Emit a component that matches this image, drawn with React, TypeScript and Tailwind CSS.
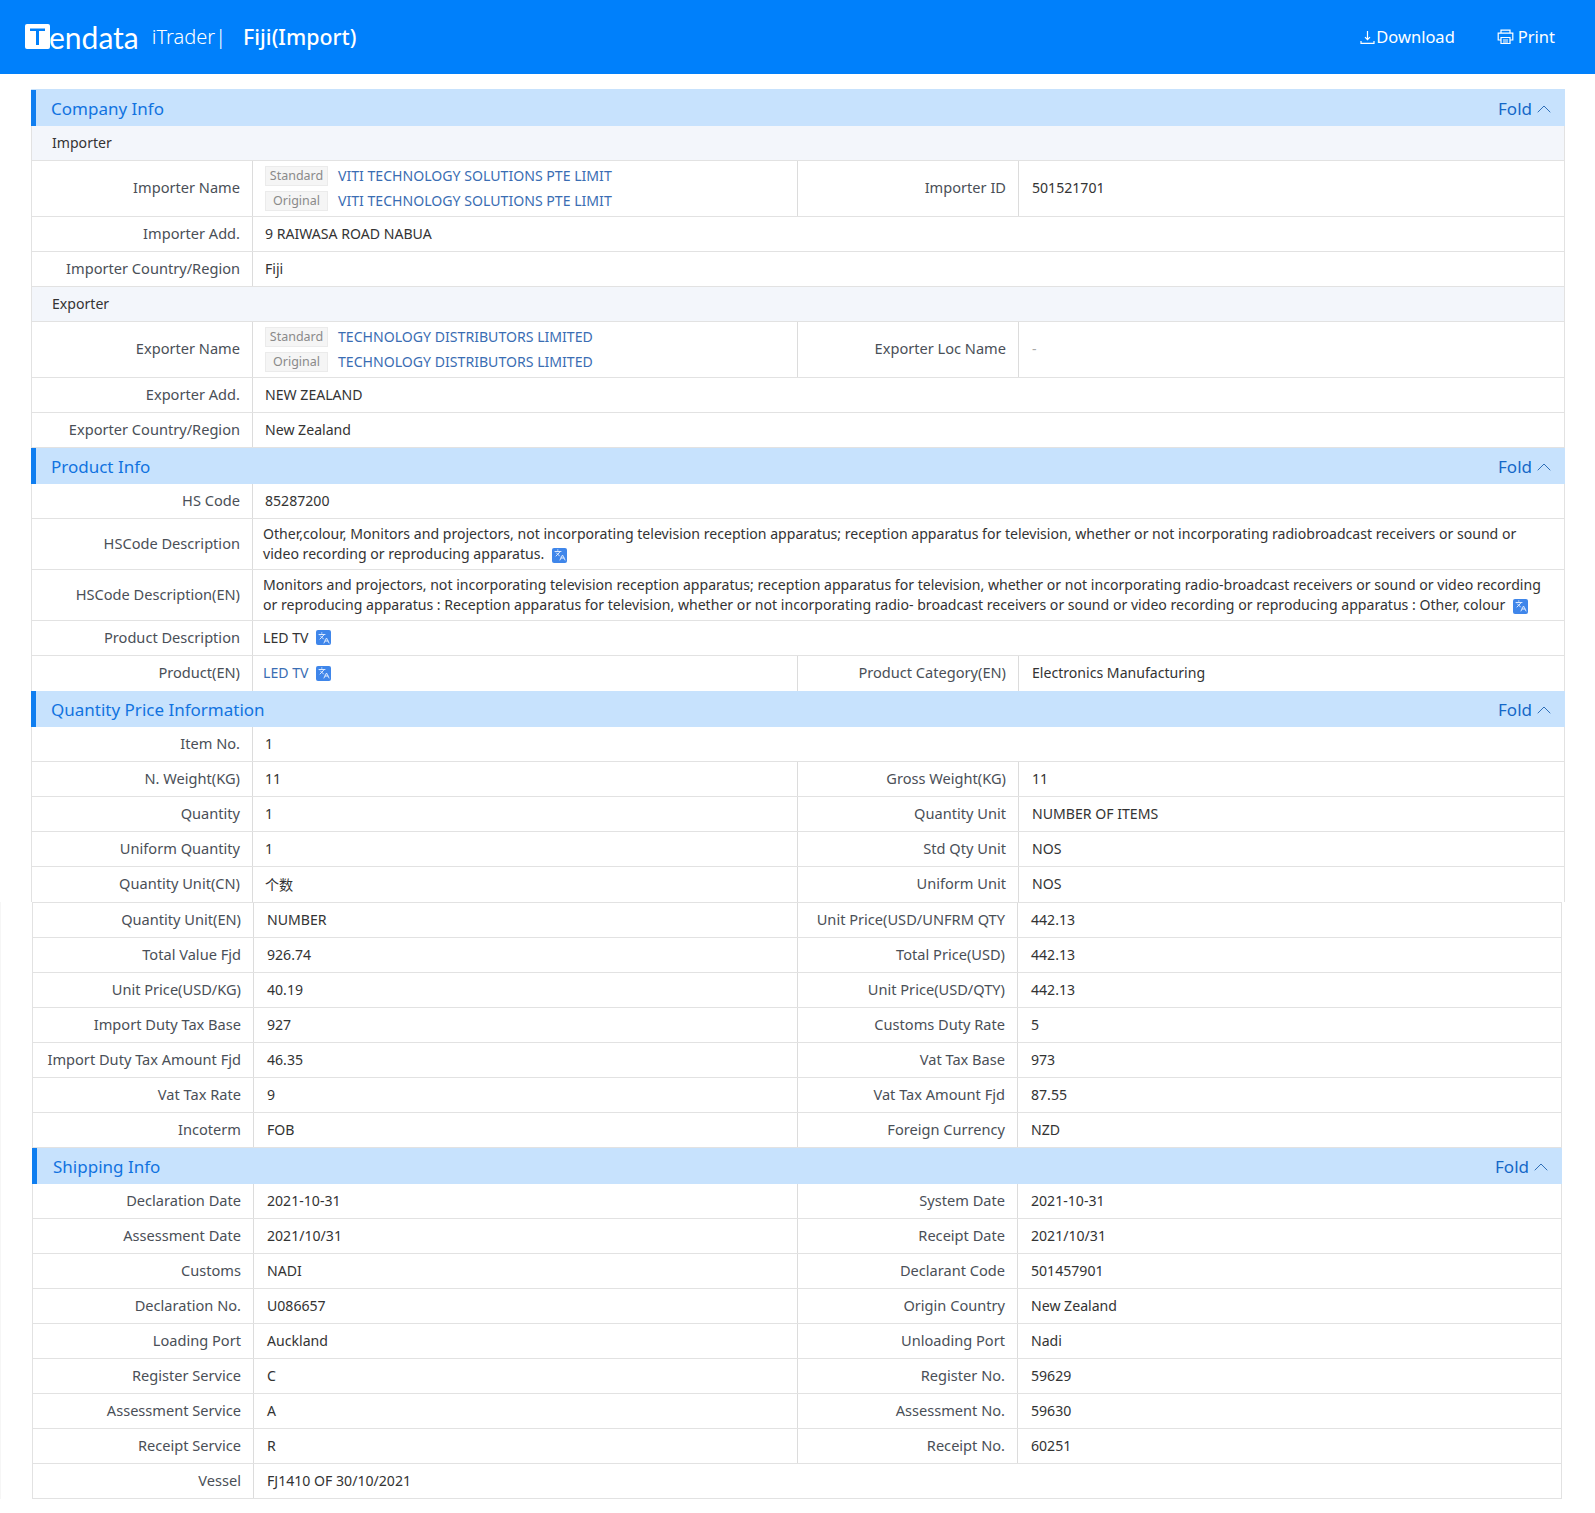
import React from "react";
import { Languages, ChevronUp } from "lucide-react";

function Trans() {
  return (
    <span className="ml-[8px] inline-flex h-[15px] w-[15px] items-center justify-center rounded-[2px] bg-[#3f86ea] align-[-2px] text-[#dbe9ff]">
      <Languages size={12} strokeWidth={2} />
    </span>
  );
}

function Section({ title, narrow }: { title: string; narrow?: boolean }) {
  return (
    <div className={`flex h-[36px] items-center justify-between border-l-[5px] border-[#0f7ef0] bg-[#c7e2fd] pr-[9px] pt-[2px] ${narrow ? "pl-[16px]" : "pl-[15px]"}`}>
      <span className="text-[17px] text-[#1173e0]">{title}</span>
      <span className="flex items-center text-[17px] text-[#1468c8]">
        Fold
        <ChevronUp size={24} strokeWidth={1} className="text-[#2f6fb8]" />
      </span>
    </div>
  );
}

function Sub({ title }: { title: string }) {
  return (
    <div className="flex h-[35px] items-center border-x border-b border-[#e2e2e2] bg-[#f3f6fb] pb-[1px] pl-[20px] text-[#333]">{title}</div>
  );
}

function Label({ children, w }: { children: React.ReactNode; w: string }) {
  return (
    <div className={`flex shrink-0 items-center justify-end border-r border-[#dcdcdc] pb-[1px] pr-[12px] text-[14.6px] text-[#4a4f57] ${w}`}>{children}</div>
  );
}

function Row({ a, b, c, d, narrow }: { a: string; b: React.ReactNode; c?: string; d?: React.ReactNode; narrow?: boolean }) {
  return (
    <div className="flex h-[35px] border-x border-b border-[#e2e2e2]">
      <Label w="w-[221px]">{a}</Label>
      {c ? (
        <>
          <div className={`flex shrink-0 items-center border-r border-[#dcdcdc] pb-[1px] ${narrow ? "w-[544px] pl-[13px]" : "w-[545px] pl-[12px]"} text-[#333]`}>{b}</div>
          <Label w={narrow ? "w-[220px]" : "w-[221px]"}>{c}</Label>
          <div className="flex items-center pb-[1px] pl-[13px] text-[#333]">{d}</div>
        </>
      ) : (
        <div className={`flex items-center pb-[1px] text-[#333] ${narrow ? "pl-[13px]" : "pl-[12px]"}`}>{b}</div>
      )}
    </div>
  );
}

function Tag({ children }: { children: string }) {
  return (
    <span className="flex h-[20px] w-[63px] items-center justify-center border border-[#ebebeb] bg-[#f5f5f5] text-[12.5px] text-[#8a8a8a]">{children}</span>
  );
}

function NameRow({ a, name, c, d, dim }: { a: string; name: string; c: string; d: string; dim?: boolean }) {
  return (
    <div className="flex h-[56px] border-x border-b border-[#e2e2e2]">
      <Label w="w-[221px]">{a}</Label>
      <div className="flex w-[545px] shrink-0 flex-col justify-center gap-[5px] border-r border-[#dcdcdc] pl-[12px] leading-[20px]">
        <div className="flex items-center gap-[10px]">
          <Tag>Standard</Tag>
          <span className="text-[#3a6db3]">{name}</span>
        </div>
        <div className="flex items-center gap-[10px]">
          <Tag>Original</Tag>
          <span className="text-[#3a6db3]">{name}</span>
        </div>
      </div>
      <Label w="w-[221px]">{c}</Label>
      <div className={`flex items-center pb-[1px] pl-[13px] ${dim ? "text-[#aaa]" : "text-[#333]"}`}>{d}</div>
    </div>
  );
}

function TextRow({ a, lines }: { a: string; lines: React.ReactNode }) {
  return (
    <div className="flex h-[51px] border-x border-b border-[#e2e2e2]">
      <Label w="w-[221px]">{a}</Label>
      <div className="flex-1 pl-[10px] pr-[16px] pt-[5px] leading-[20px] text-[#333]">{lines}</div>
    </div>
  );
}

const lower1: [string, string, string, string][] = [
  ["Quantity Unit(EN)", "NUMBER", "Unit Price(USD/UNFRM QTY", "442.13"],
  ["Total Value Fjd", "926.74", "Total Price(USD)", "442.13"],
  ["Unit Price(USD/KG)", "40.19", "Unit Price(USD/QTY)", "442.13"],
  ["Import Duty Tax Base", "927", "Customs Duty Rate", "5"],
  ["Import Duty Tax Amount Fjd", "46.35", "Vat Tax Base", "973"],
  ["Vat Tax Rate", "9", "Vat Tax Amount Fjd", "87.55"],
  ["Incoterm", "FOB", "Foreign Currency", "NZD"],
];

const lower2: [string, string, string, string][] = [
  ["Declaration Date", "2021-10-31", "System Date", "2021-10-31"],
  ["Assessment Date", "2021/10/31", "Receipt Date", "2021/10/31"],
  ["Customs", "NADI", "Declarant Code", "501457901"],
  ["Declaration No.", "U086657", "Origin Country", "New Zealand"],
  ["Loading Port", "Auckland", "Unloading Port", "Nadi"],
  ["Register Service", "C", "Register No.", "59629"],
  ["Assessment Service", "A", "Assessment No.", "59630"],
  ["Receipt Service", "R", "Receipt No.", "60251"],
];

export default function App() {
  return (
    <div className="min-h-[1513px] bg-white font-['Noto_Sans','Noto_Sans_CJK_SC',sans-serif] text-[14.1px]">
      <header className="flex h-[74px] items-center justify-between bg-[#0080fb] pl-[25px] pr-[40px] text-white">
        <div className="flex items-center">
          <svg width="25" height="25" viewBox="0 0 25 25">
            <rect width="25" height="25" rx="2" fill="#fff" />
            <path d="M5 4.5h15v2.6h-6v13.9h-3V7.1H5z" fill="#0080fb" />
          </svg>
          <span className="ml-[-1px] font-['Lato',sans-serif] text-[30px] font-normal leading-none">endata</span>
          <span className="ml-[13px] text-[20px] font-light">iTrader|</span>
          <span className="ml-[17px] text-[21.4px] font-medium">Fiji(Import)</span>
        </div>
        <div className="flex items-center text-[16.5px]">
          <svg width="15" height="15" viewBox="0 0 15 15" fill="none" stroke="#fff" strokeWidth="1.2">
            <path d="M7.5 1v8.5M5 7.2l2.5 2.5L10 7.2M1 11v2.3h13V11" />
          </svg>
          <span className="ml-[1px]">Download</span>
          <svg className="ml-[42px]" width="17" height="16" viewBox="0 0 17 16" fill="none" stroke="#fff" strokeWidth="1.2">
            <path d="M4 4V1.2h9V4M4 11H1.2V4.2h14.6V11H13M4 8.5h9v6H4zM6 11h5M6 13h5" />
          </svg>
          <span className="ml-[4px]">Print</span>
        </div>
      </header>

      <div className="ml-[31px] mt-[15px] w-[1534px]">
        <div className="h-[1px] bg-[#c7e2fd]" />
        <Section title="Company Info" />
        <Sub title="Importer" />
        <NameRow a="Importer Name" name="VITI TECHNOLOGY SOLUTIONS PTE LIMIT" c="Importer ID" d="501521701" />
        <Row a="Importer Add." b="9 RAIWASA ROAD NABUA" />
        <Row a="Importer Country/Region" b="Fiji" />
        <Sub title="Exporter" />
        <NameRow a="Exporter Name" name="TECHNOLOGY DISTRIBUTORS LIMITED" c="Exporter Loc Name" d="-" dim />
        <Row a="Exporter Add." b="NEW ZEALAND" />
        <Row a="Exporter Country/Region" b="New Zealand" />
        <Section title="Product Info" />
        <Row a="HS Code" b="85287200" />
        <TextRow
          a="HSCode Description"
          lines={
            <>
              Other,colour, Monitors and projectors, not incorporating television reception apparatus; reception apparatus for television, whether or not incorporating radiobroadcast receivers or sound or video recording or reproducing apparatus.
              <Trans />
            </>
          }
        />
        <TextRow
          a="HSCode Description(EN)"
          lines={
            <>
              Monitors and projectors, not incorporating television reception apparatus; reception apparatus for television, whether or not incorporating radio-broadcast receivers or sound or video recording or reproducing apparatus : Reception apparatus for television, whether or not incorporating radio- broadcast receivers or sound or video recording or reproducing apparatus : Other, colour
              <Trans />
            </>
          }
        />
        <div className="flex h-[35px] border-x border-b border-[#e2e2e2]">
          <Label w="w-[221px]">Product Description</Label>
          <div className="flex items-center pb-[1px] pl-[10px] text-[#333]">LED TV<Trans /></div>
        </div>
        <div className="flex h-[35px] border-x border-[#e2e2e2]">
          <Label w="w-[221px]">Product(EN)</Label>
          <div className="flex w-[545px] shrink-0 items-center border-r border-[#dcdcdc] pb-[1px] pl-[10px] text-[#3a6db3]">LED TV<Trans /></div>
          <Label w="w-[221px]">Product Category(EN)</Label>
          <div className="flex items-center pb-[1px] pl-[13px] text-[#333]">Electronics Manufacturing</div>
        </div>
        <Section title="Quantity Price Information" />
        <Row a="Item No." b="1" />
        <Row a="N. Weight(KG)" b="11" c="Gross Weight(KG)" d="11" />
        <Row a="Quantity" b="1" c="Quantity Unit" d="NUMBER OF ITEMS" />
        <Row a="Uniform Quantity" b="1" c="Std Qty Unit" d="NOS" />
        <div className="flex h-[35px] border-x border-[#e2e2e2]">
          <Label w="w-[221px]">Quantity Unit(CN)</Label>
          <div className="flex w-[545px] shrink-0 items-center border-r border-[#dcdcdc] pl-[12px] text-[#333]">个数</div>
          <Label w="w-[221px]">Uniform Unit</Label>
          <div className="flex items-center pb-[1px] pl-[13px] text-[#333]">NOS</div>
        </div>
      </div>

      <div className="border-l border-[#f6f6f6] pl-[31px]">
        <div className="w-[1530px] border-t border-[#e2e2e2]">
          {lower1.map((r) => (
            <Row key={r[0]} a={r[0]} b={r[1]} c={r[2]} d={r[3]} narrow />
          ))}
          <Section narrow title="Shipping Info" />
          {lower2.map((r) => (
            <Row key={r[0]} a={r[0]} b={r[1]} c={r[2]} d={r[3]} narrow />
          ))}
          <Row a="Vessel" b="FJ1410 OF 30/10/2021" narrow />
        </div>
      </div>
    </div>
  );
}
